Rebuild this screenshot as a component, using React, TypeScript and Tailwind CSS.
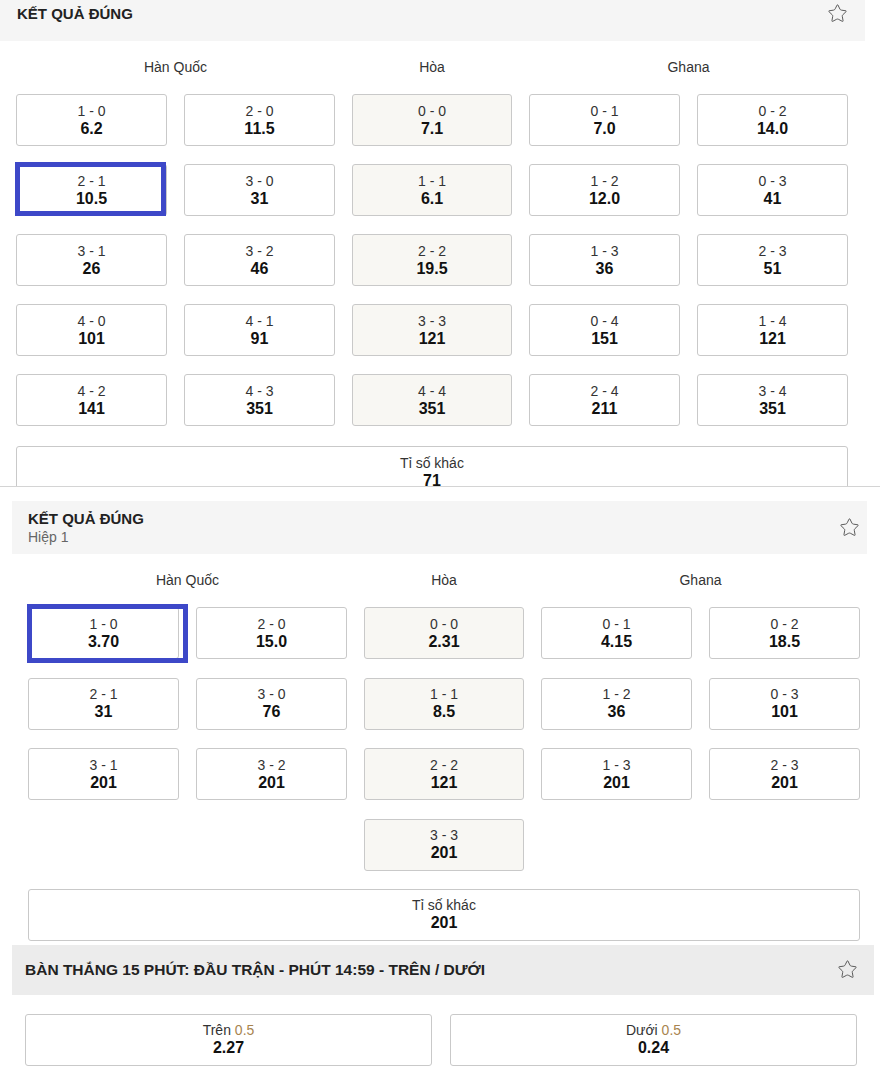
import React from "react";
import { Star } from "lucide-react";

type Cell = { s: string; v: string; draw?: boolean; sel?: "a" | "b" } | null;

const font = { fontFamily: '"Liberation Sans", Arial, sans-serif' };

const StarIcon = () => (
  <Star size={21} strokeWidth={1.1} className="text-[#555]" />
);

const OddBtn = ({ c }: { c: Cell }) => {
  if (!c) return <div />;
  return (
    <div className="relative">
      <div
        className={`flex h-[52px] flex-col items-center justify-center rounded-[3px] border border-[#c9c9c9] ${
          c.draw ? "bg-[#f8f7f3]" : "bg-white"
        }`}
      >
        <span className="text-[14px] leading-[17px] text-[#333]">{c.s}</span>
        <span className="text-[16px] font-bold leading-[18px] text-[#111]">{c.v}</span>
      </div>
      {c.sel === "a" && (
        <div className="absolute -left-[1px] -top-[2px] h-[54px] w-[151px] border-[5px] border-[#3d48c8]" />
      )}
      {c.sel === "b" && (
        <div className="absolute -left-[1px] -top-[3px] h-[59px] w-[161px] border-[5px] border-[#3d48c8]" />
      )}
    </div>
  );
};

const Labels = () => (
  <div className="grid h-[53px] grid-cols-[319px_160px_319px] gap-x-[17px] text-[14px] text-[#333]">
    <div className="flex items-center justify-center">Hàn Quốc</div>
    <div className="flex items-center justify-center">Hòa</div>
    <div className="flex items-center justify-center">Ghana</div>
  </div>
);

const Grid = ({ rows, gap }: { rows: Cell[][]; gap: string }) => (
  <div className={`grid grid-cols-[151px_151px_160px_151px_151px] gap-x-[17px] ${gap}`}>
    {rows.flat().map((c, i) => (
      <OddBtn key={i} c={c} />
    ))}
  </div>
);

const Other = ({ v }: { v: string }) => (
  <div className="flex h-[52px] flex-col items-center justify-center rounded-[3px] border border-[#c9c9c9] bg-white">
    <span className="text-[14px] leading-[17px] text-[#333]">Tỉ số khác</span>
    <span className="text-[16px] font-bold leading-[18px] text-[#111]">{v}</span>
  </div>
);

const full: Cell[][] = [
  [{ s: "1 - 0", v: "6.2" }, { s: "2 - 0", v: "11.5" }, { s: "0 - 0", v: "7.1", draw: true }, { s: "0 - 1", v: "7.0" }, { s: "0 - 2", v: "14.0" }],
  [{ s: "2 - 1", v: "10.5", sel: "a" }, { s: "3 - 0", v: "31" }, { s: "1 - 1", v: "6.1", draw: true }, { s: "1 - 2", v: "12.0" }, { s: "0 - 3", v: "41" }],
  [{ s: "3 - 1", v: "26" }, { s: "3 - 2", v: "46" }, { s: "2 - 2", v: "19.5", draw: true }, { s: "1 - 3", v: "36" }, { s: "2 - 3", v: "51" }],
  [{ s: "4 - 0", v: "101" }, { s: "4 - 1", v: "91" }, { s: "3 - 3", v: "121", draw: true }, { s: "0 - 4", v: "151" }, { s: "1 - 4", v: "121" }],
  [{ s: "4 - 2", v: "141" }, { s: "4 - 3", v: "351" }, { s: "4 - 4", v: "351", draw: true }, { s: "2 - 4", v: "211" }, { s: "3 - 4", v: "351" }],
];

const half: Cell[][] = [
  [{ s: "1 - 0", v: "3.70", sel: "b" }, { s: "2 - 0", v: "15.0" }, { s: "0 - 0", v: "2.31", draw: true }, { s: "0 - 1", v: "4.15" }, { s: "0 - 2", v: "18.5" }],
  [{ s: "2 - 1", v: "31" }, { s: "3 - 0", v: "76" }, { s: "1 - 1", v: "8.5", draw: true }, { s: "1 - 2", v: "36" }, { s: "0 - 3", v: "101" }],
  [{ s: "3 - 1", v: "201" }, { s: "3 - 2", v: "201" }, { s: "2 - 2", v: "121", draw: true }, { s: "1 - 3", v: "201" }, { s: "2 - 3", v: "201" }],
  [null, null, { s: "3 - 3", v: "201", draw: true }, null, null],
];

export default function App() {
  return (
    <div className="h-[1092px] w-[880px] overflow-hidden bg-white" style={font}>
      {/* full match */}
      <div className="h-[486px] w-[865px] overflow-hidden">
        <div className="flex h-[41px] items-start justify-between bg-[#f5f5f5] pl-[17px] pr-[17px]">
          <span className="pt-[5px] text-[15px] font-bold leading-[18px] text-[#222]">KẾT QUẢ ĐÚNG</span>
          <span className="pt-[3px]"><StarIcon /></span>
        </div>
        <div className="pl-[16px]">
          <Labels />
          <Grid rows={full} gap="gap-y-[18px]" />
          <div className="mt-[20px] w-[832px]">
            <Other v="71" />
          </div>
        </div>
      </div>
      <div className="h-px w-[880px] bg-[#d4d4d4]" />

      {/* first half */}
      <div className="ml-[12px] mt-[14px] w-[855px]">
        <div className="flex h-[53px] items-center justify-between bg-[#f5f5f5] pl-[16px] pr-[7px]">
          <div className="flex flex-col">
            <span className="text-[15px] font-bold leading-[18px] text-[#222]">KẾT QUẢ ĐÚNG</span>
            <span className="text-[14px] leading-[18px] text-[#666]">Hiệp 1</span>
          </div>
          <StarIcon />
        </div>
        <div className="pl-[16px]">
          <Labels />
          <Grid rows={half} gap="gap-y-[18.5px]" />
          <div className="mt-[18px] w-[832px]">
            <Other v="201" />
          </div>
        </div>
      </div>

      {/* 15 min */}
      <div className="ml-[12px] mt-[4px] w-[862px]">
        <div className="flex h-[50px] items-center justify-between bg-[#ececec] pl-[13px] pr-[16px]">
          <span className="text-[15.5px] font-bold text-[#222]">
            BÀN THẮNG 15 PHÚT: ĐẦU TRẬN - PHÚT 14:59 - TRÊN / DƯỚI
          </span>
          <StarIcon />
        </div>
        <div className="mt-[19px] grid grid-cols-2 gap-x-[18px] pl-[13px] pr-[17px]">
          {[
            { l: "Trên", v: "2.27" },
            { l: "Dưới", v: "0.24" },
          ].map((b) => (
            <div
              key={b.l}
              className="flex h-[52px] flex-col items-center justify-center rounded-[3px] border border-[#c9c9c9] bg-white"
            >
              <span className="text-[14px] leading-[17px] text-[#333]">
                {b.l} <span className="text-[#a8844f]">0.5</span>
              </span>
              <span className="text-[16px] font-bold leading-[18px] text-[#111]">{b.v}</span>
            </div>
          ))}
        </div>
      </div>
    </div>
  );
}
